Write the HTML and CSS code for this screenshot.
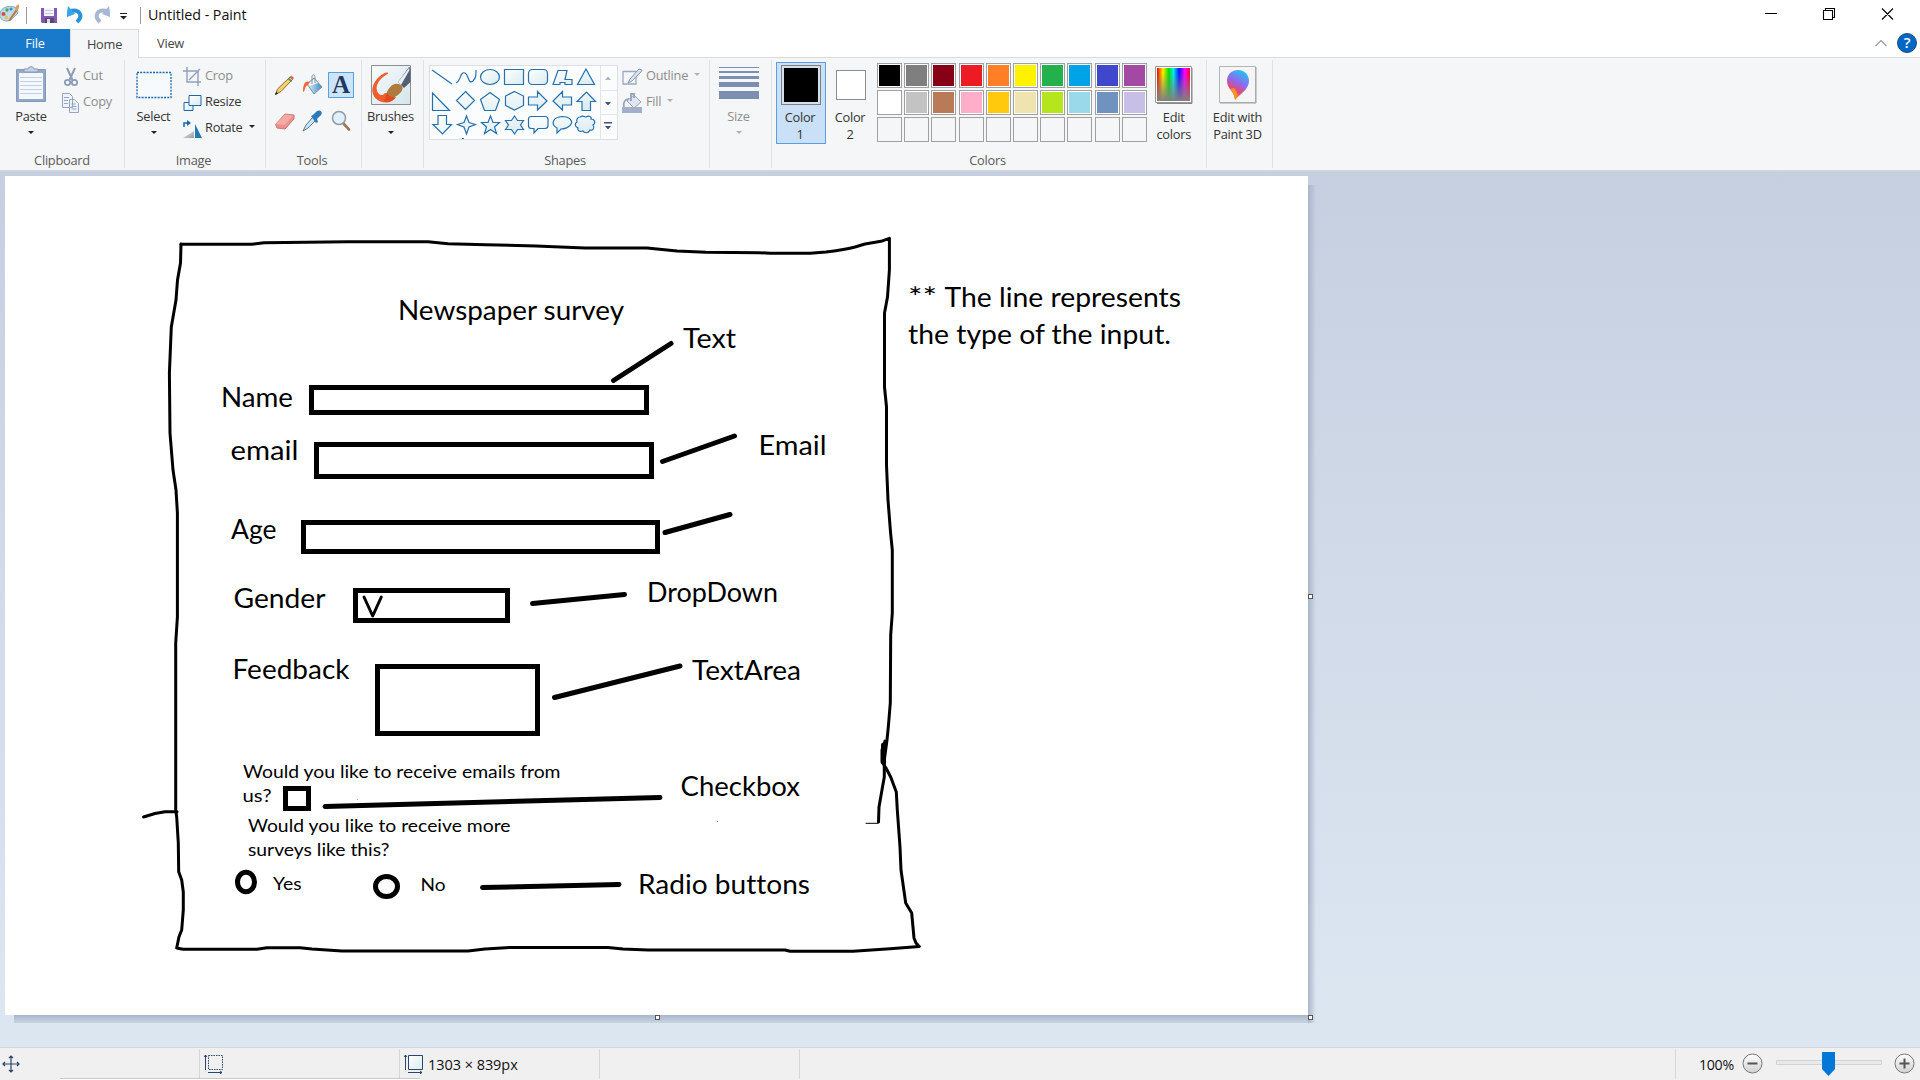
FILE: index.html
```html
<!DOCTYPE html>
<html lang="en">
<head>
<meta charset="utf-8">
<title>Untitled - Paint</title>
<link rel="stylesheet" href="styles.css">
</head>
<body>
<svg class="defs" width="0" height="0">
  <defs>
    <linearGradient id="shape" x1="0" y1="0" x2="1" y2="1"><stop offset="0" stop-color="#fff"/><stop offset="1" stop-color="#d8ebf0"/></linearGradient>
    <linearGradient id="blue" x1="0" y1="0" x2="1" y2="0"><stop offset="0" stop-color="#e4f1fa"/><stop offset="1" stop-color="#3d8cc8"/></linearGradient>
    <linearGradient id="fade" x1="0" y1="0" x2="1" y2="1"><stop offset="0" stop-color="#eee"/><stop offset="1" stop-color="#999"/></linearGradient>
    <linearGradient id="bg" x1="0" y1="0" x2="1" y2="1"><stop offset="0" stop-color="#f8fafb"/><stop offset="1" stop-color="#d3e6ec"/></linearGradient>
    <linearGradient id="hue"><stop offset="0" stop-color="#e00"/><stop offset=".18" stop-color="#fe0"/><stop offset=".36" stop-color="#0d0"/><stop offset=".5" stop-color="#0ee"/><stop offset=".67" stop-color="#11f"/><stop offset=".84" stop-color="#f0f"/><stop offset="1" stop-color="#f02"/></linearGradient>
    <linearGradient id="dull" x1="0" y1="0" x2="0" y2="1"><stop offset=".15" stop-color="#808080" stop-opacity="0"/><stop offset="1" stop-color="#808080"/></linearGradient>
    <linearGradient id="drop" x1=".7" y1="0" x2=".3" y2="1"><stop offset="0" stop-color="#20c8f5"/><stop offset=".4" stop-color="#8b6cf0"/><stop offset=".7" stop-color="#e8447c"/><stop offset="1" stop-color="#ffb000"/></linearGradient>
    <linearGradient id="knob" x1="0" y1="0" x2="0" y2="1"><stop offset="0" stop-color="#fff"/><stop offset="1" stop-color="#d0d0d0"/></linearGradient>
  </defs>
</svg>

<header class="titlebar">
  <div class="quick">
    <svg class="app-icon" width="20" height="20" viewBox="0 0 20 20"><path d="M0 9C1 4 8 1 14 3c5 2 5 7 1 9-2 1-3 5-8 5S-1 14 0 9z" fill="#b9dceb" stroke="#7da7bf"/><circle cx="3.500" cy="10" r="2" fill="#d94d3b"/><circle cx="7" cy="6" r="1.700" fill="#4ca853"/><circle cx="11" cy="5" r="1.600" fill="#3b8fd4"/><circle cx="6.500" cy="13.500" r="1.800" fill="#edc04f"/><path d="M8 17 16 5l2 1-8 11z" fill="#c8743a"/><path d="M15 6l1-4 3-2v4l-2 3z" fill="#d7a05b"/></svg>
    <i class="bar"></i>
    <svg class="save" width="16" height="15" viewBox="0 0 16 15"><path d="M0 0h16v15H1L0 14z" fill="#8258b5"/><path d="M3 0h10v8H3z" fill="#f4f3f8"/><path d="M4 2.500h8M4 5.500h8" stroke="#c9c5d8"/><path d="M4 10h9v5H4z" fill="#564b62"/><path d="M6 11h3v4H6z" fill="#dcdce4"/></svg>
    <svg class="undo" width="17" height="18" viewBox="0 0 17 18"><path d="M2 5.500C13 2 16.500 10 10 16" fill="none" stroke="#2a93d8" stroke-width="4"/><path d="M0 6 1 0l7 8-8 3z" fill="#39a5e5"/></svg>
    <svg class="redo" width="17" height="18" viewBox="0 0 17 18"><path d="M15 5.500C4 2 .5 10 7 16" fill="none" stroke="#a9b8d2" stroke-width="4"/><path d="M17 6 16 0 9 8l8 3z" fill="#a9b8d2"/></svg>
    <svg class="more" width="7" height="7" viewBox="0 0 7 7"><path d="M0 .5h7" stroke="#222"/><path d="M0 3h7L3.500 6.500z" fill="#222"/></svg>
    <i class="bar"></i>
    <h1>Untitled - Paint</h1>
  </div>
  <svg class="window-buttons" width="150" height="14" viewBox="0 0 150 14" fill="none" stroke="#000" stroke-width="1.100"><path d="M5 6.500h12M63.500 3.500h9v9h-9zM65.500 3V1.500h9v9H73M122 1.500l11 11M133 1.500l-11 11"/></svg>
</header>

<nav class="tabs">
  <span class="tab file">File</span><span class="tab home">Home</span><span class="tab view">View</span>
  <svg class="help" width="44" height="22" viewBox="0 0 44 22"><path d="M2.500 14 8 8.500l5.500 5.500" fill="none" stroke="#999" stroke-width="1.200"/><circle cx="34" cy="11" r="9.500" fill="#0067c5" stroke="#194f83"/><text x="34" y="16" text-anchor="middle" class="help-mark">?</text></svg>
</nav>

<section class="ribbon">
  <div class="group clipboard">
    <div class="tools-row">
      <div class="big paste">
        <svg width="32" height="38" viewBox="0 0 32 38"><path d="M1.500 3.500h29v32h-29z" fill="#93a8c9" stroke="#8398bb"/><path d="M4 7h24v26H4z" fill="#f4f8fd"/><path d="M5 11.500h22M5 15.500h22M5 19.500h22M5 23.500h22M5 27.500h22" stroke="#c3d0e3"/><path d="M9 6V3h4c0-3 6-3 6 0h4v3z" fill="#c5d0e0" stroke="#8398bb"/></svg>
        <span>Paste</span><i class="arrow"></i>
      </div>
      <div class="small-list off">
        <div class="small"><svg width="18" height="20" viewBox="0 0 18 20" fill="none" stroke="#8c9cb8"><path d="M5 1l5.500 12M13 1 7.500 13" stroke-width="2"/><circle cx="5.500" cy="15.500" r="2.700" stroke-width="1.800"/><circle cx="12.500" cy="15.500" r="2.700" stroke-width="1.800"/></svg><span>Cut</span></div>
        <div class="small"><svg width="18" height="20" viewBox="0 0 18 20" fill="#f0f4fa" stroke="#94a5c2"><path d="M.5.500h7l3 3v11H.5zM7.500 6.500h5l4 4v9h-9z"/><path d="M2 4.500h5M2 7.500h4M2 10.500h4M9.500 11h4M9.500 13.500h5M9.500 16h5"/></svg><span>Copy</span></div>
      </div>
    </div>
    <div class="caption">Clipboard</div>
  </div>

  <div class="group image">
    <div class="tools-row">
      <div class="big select">
        <svg width="36" height="38" viewBox="0 0 36 38"><path d="M1 6.500h34v25H1z" fill="#f7fafd" stroke="#1968ab" stroke-width="1.300" stroke-dasharray="2 1.200"/></svg>
        <span>Select</span><i class="arrow"></i>
      </div>
      <div class="small-list">
        <div class="small off"><svg width="19" height="20" viewBox="0 0 19 20" fill="none" stroke="#8fa0bd" stroke-width="1.400"><path d="M4 0v15h14M0 4h15v15M6 13 17 2"/></svg><span>Crop</span></div>
        <div class="small"><svg width="19" height="18" viewBox="0 0 19 18" fill="url(#shape)" stroke="#1968ab"><path d="M1 8.500h9v8H1z"/><path d="M6 1.500h12v10H6z"/></svg><span>Resize</span></div>
        <div class="small"><svg width="19" height="20" viewBox="0 0 19 20"><path d="M0 19 11 12v7z" fill="url(#fade)"/><path d="M12 5v14h7z" fill="#2379b5"/><path d="M1 8V4h4" fill="none" stroke="#1968ab" stroke-width="1.500"/><path d="M4 1l4 3-4 3z" fill="#1968ab"/></svg><span>Rotate</span><i class="arrow"></i></div>
      </div>
    </div>
    <div class="caption">Image</div>
  </div>

  <div class="group tools">
    <div class="tool-grid">
      <span class="tool"><svg width="22" height="22" viewBox="0 0 22 22"><path d="M1.500 20.500l2-5.500L16 3l2.500 2.500L7 17.500z" fill="#f5cf66" stroke="#77613b" stroke-width=".9"/><path d="M15.500 3l2-1.500 2.500 2.500-1.500 2z" fill="#cf6d68"/><path d="M14.500 4.500l3 3" stroke="#4b8b64" stroke-width="1.600"/><path d="M1 21l1.200-3.200 2 1.700z" fill="#222"/></svg></span>
      <span class="tool"><svg width="22" height="22" viewBox="0 0 22 22"><path d="M5 10 12 4l8 9-8 7z" fill="url(#blue)" stroke="#7890a4"/><path d="M6 10 12 5l4 4-8 3z" fill="#edf6fb"/><path d="M10 10V2c1-2 3-1 3 1v6" fill="none" stroke="#8993a0"/><path d="M8 8C3 6 1 10 1 18c3-1 1-6 5-7z" fill="#ef683b"/></svg></span>
      <span class="tool chosen">A</span>
      <span class="tool"><svg width="22" height="22" viewBox="0 0 22 22"><path d="M1.500 14.500 11 4l9 1v4l-9 10-8-1z" fill="#ed8f8b" stroke="#cb7774"/><path d="M2 14 11 4.500l8 1-8 9.500z" fill="#f7aaa4"/></svg></span>
      <span class="tool"><svg width="22" height="22" viewBox="0 0 22 22"><path d="M1 21l3-6 7-8 3 3-8 8z" fill="#c9e6f5" stroke="#5b7689"/><path d="M9 6l2-1 4-4c4-2 6 2 4 4l-4 4 1 3-2 1z" fill="#2e79bb"/></svg></span>
      <span class="tool"><svg width="22" height="22" viewBox="0 0 22 22"><path d="M13 13l6 6.500" stroke="#9b7957" stroke-width="2.600" stroke-linecap="round"/><circle cx="9" cy="8" r="6.500" fill="#e0f1fd" stroke="#929ba8" stroke-width="1.500"/></svg></span>
    </div>
    <div class="caption">Tools</div>
  </div>

  <div class="group brushes">
    <div class="big">
      <svg width="40" height="40" viewBox="0 0 40 40"><path d="M.5.500h39v39H.5z" fill="url(#bg)" stroke="#8e8e8e"/><path d="M16.500 7.500C13 7 3 14 1.500 23 0 32 8 38 16 37.500c6-.5 8-4 8-8L14 28c-2 3-6 3-8-2-2-7 4-13 9-16 2-1 3-2 1.500-2.500z" fill="#ee5d2c"/><path d="M27 17 38 2l1.500 1v14L33 23z" fill="#516072"/><path d="M27 17 38 3l.5 2-8.500 15z" fill="#e8eef3"/><path d="M15 29c3-7 7-11 12-10 6 1 6 6 1 10-4 4-8 4-11 3-2-1-2-2-2-3z" fill="#b07a3c"/><path d="M12 36c3-1 2-5 4-8 3 4 6 5 9 4-2 4-8 6-13 4z" fill="#e24a1d"/></svg>
      <span>Brushes</span><i class="arrow"></i>
    </div>
  </div>

  <div class="group shapes">
    <div class="tools-row">
      <div class="gallery">
        <svg width="170" height="73" viewBox="430 66 170 73" fill="url(#shape)" stroke="#2570ad" stroke-width="1.200">
          <path d="M432 70l20 14" fill="none"/><path d="M456 83c5-2 4-12 9-10 4 2 3 12 8 8 3-3 3-6 3-11" fill="none"/><ellipse cx="490" cy="77" rx="9.500" ry="7.500"/><path d="M504.500 69.500h19v15h-19z"/><rect x="528.500" y="69.500" width="19" height="15" rx="4"/><path d="M553 84.500l5-14h9l-2 9h7v5h-7v-2h-5v2zM586 69l8.500 15.500h-17z"/>
          <path d="M432.500 93v17.500h17zM465.500 91.500l9 9-9 9-9-9zM490 92.500l9.500 7-4 11h-11l-4-11zM514.500 91.500l9 4.500v9.500l-9 4.500-9-4.500V96zM528.500 97h9v-5.500l9.500 9.500-9.500 9v-5h-9zM571.500 97h-9v-5.500l-9.500 9.500 9.500 9v-5h9zM582 110.500v-9h-5l9.500-9.500 9 9.500h-5v9z"/>
          <path d="M438 115.500v9h-5l9.500 9.500 9-9.500h-5v-9zM466.500 116l2.500 6.500 6.500 2-6.500 2.500-2.500 7-2.500-7-6.500-2.500 6.500-2zM490.500 116l2.500 6.500h6.500l-5 4.500 2 6.500-6-4-6 4 2-6.500-5-4.500h6.500zM514.500 116l3 4.500h6l-3 4.500 3 4.500h-6l-3 4.500-3-4.500h-6l3-4.500-3-4.500h6z"/><path d="M531 116.500h14q3 0 3 3v6q0 3-3 3h-7l-4 4.500v-4.500h-3q-2.500 0-2.500-3v-6q0-3 2.500-3zM557 128c-7-4-4-11 5-11.500 8 0 12 5 8 9-3 3-6 3.500-9 3.500l-4 4zM580 117c3-2 5 0 6 0 3-2 6 0 5 2 4 0 5 4 2 6 2 3 0 6-3 5-2 4-6 3-7 1-3 1-6 0-5-3-4-2-3-5-1-6-1-3 1-5 3-5z"/>
          <path d="M462 138.500h2" stroke-width="1"/>
        </svg>
        <svg class="scroll" width="18" height="73" viewBox="0 0 18 73"><path d="M.5 0v73M0 24.500h18M0 48.500h18" stroke="#e2e4e7"/><path d="M5 14h6L8 10.500z" fill="#b0b6c0"/><path d="M5 36h6l-3 3.500zM5 60h6l-3 3.500zM4 56h8v1.500H4z" fill="#3f5573"/></svg>
      </div>
      <div class="small-list off style">
        <div class="small"><svg width="21" height="18" viewBox="0 0 21 18"><path d="M1 3.500h14M1 3v13h13V9" fill="none" stroke="#9aa9c2" stroke-width="1.300"/><path d="M6 15l2-4L17 1l3 1-1 2-9 9z" fill="#d8e0ec" stroke="#8798b5"/></svg><span>Outline</span><i class="arrow"></i></div>
        <div class="small"><svg width="21" height="20" viewBox="0 0 21 20"><path d="M0 14h20v6H0z" fill="#a3b0ca"/><path d="M5 8l7-6 7 7-7 6z" fill="#dfe6ef" stroke="#97a5bd"/><path d="M9 8V1h3v4M2 14C1 9 3 6 7 6" fill="none" stroke="#97a5bd" stroke-width="1.800"/></svg><span>Fill</span><i class="arrow"></i></div>
      </div>
    </div>
    <div class="caption">Shapes</div>
  </div>

  <div class="group size off">
    <div class="big">
      <svg width="40" height="38" viewBox="0 0 40 38" fill="#7c8fb1"><path d="M0 1h40v1H0zM0 5h40v2H0zM0 10h40v3H0zM0 16h40v5H0zM0 25h40v8H0z"/></svg>
      <span>Size</span><i class="arrow"></i>
    </div>
  </div>

  <div class="group colors">
    <div class="tools-row">
      <div class="slot current"><b class="ink black"></b><span>Color<br>1</span></div>
      <div class="slot"><b class="ink white"></b><span>Color<br>2</span></div>
      <div class="palette">
        <i class="c1"></i><i class="c2"></i><i class="c3"></i><i class="c4"></i><i class="c5"></i><i class="c6"></i><i class="c7"></i><i class="c8"></i><i class="c9"></i><i class="c10"></i>
        <i class="c11"></i><i class="c12"></i><i class="c13"></i><i class="c14"></i><i class="c15"></i><i class="c16"></i><i class="c17"></i><i class="c18"></i><i class="c19"></i><i class="c20"></i>
        <i></i><i></i><i></i><i></i><i></i><i></i><i></i><i></i><i></i><i></i>
      </div>
      <div class="big edit">
        <svg width="38" height="38" viewBox="0 0 38 38"><path d="M.5.500h36v36H.5z" fill="#fff" stroke="#999"/><path d="M37 2v35.500H2" fill="none" stroke="#888"/><path d="M2 2h33v33H2z" fill="url(#hue)"/><path d="M2 2h33v33H2z" fill="url(#dull)"/></svg>
        <span>Edit<br>colors</span>
      </div>
    </div>
    <div class="caption">Colors</div>
  </div>

  <div class="group paint3d">
    <div class="big">
      <svg width="38" height="38" viewBox="0 0 38 38"><path d="M.5.500h36v36H.5z" fill="#f5f5f5" stroke="#b5b5b5"/><path d="M37 1v36H1" fill="none" stroke="#a0a0a0"/><path d="M19 4c7 0 11 5 11 11 0 8-8 12-14 19 0-8-8-11-8-19C8 9 12 4 19 4z" fill="url(#drop)"/><path d="M15 22c4 4 4 8 1 12-1-4-1-7-5-11z" fill="#f7931e"/></svg>
      <span>Edit with<br>Paint 3D</span>
    </div>
  </div>
</section>

<main class="workspace">
  <div class="canvas">
    <svg width="1303" height="839" viewBox="5 176 1303 839">
      <g class="outline">
        <path d="M181 244.300H252L264 242.700 348 241.700H428L448 243.700 486 244.700 536 246 585 248H647L677 251 706 252.300 759 252.700 770 253.300H810L826 252Q843 250 855 247L865 244 881 241.300 889.400 238.300V270L887.500 297 884.500 313V387L886.500 407V465L888 500 890.600 533 892.300 550V613L890.700 635 890.300 703 888.300 727 887 740 884.300 760V777L882.500 787 879 807 878.500 822"/>
        <path d="M866 823.300H878" class="thin"/>
        <path d="M885 741 882 750V762L886 768 890.700 777 896.300 792 897.300 810 900 847 901 870 905.700 903 911.700 913 914 938 916 943 919.300 946.500 890 948.700 853 951.300H790L785 950H648L623 949 608 947.500H510L485 949 468 951H342L312 949 300 947.700H267L257 949.300H183L176.700 948 179 936.700 181.700 930 183.300 910V892L181.700 880 178.700 871.700 178.300 843 176.700 817 175.700 810V643L177.400 617V513L176 490 173 470 170 433 169.400 373 171.300 327 176 300 177.500 280 180.500 263 181 244"/>
        <path d="M143.500 817 155 813.500 165 811.700H177"/>
        <path d="M883.500 745V762" class="thick"/>
        <path d="M364 597 372.700 616 381.300 597"/>
      </g>
      <g class="marker">
        <path d="M311.500 387.500h335v25h-335zM316.500 444.500h335v32h-335zM303.500 522.500h354v29h-354zM355.500 590.500h152v30h-152zM377.500 666.500h160v67h-160zM285.500 788.500h23v20h-23z"/>
        <path class="round" d="M613.500 380.500 671 343.500M662.500 461.500 734.500 436M665 532.500 730 514.500M532.500 603.500 624.500 594.500M554.500 697.500 680 666M325 806.500 660 797.500M482.500 887.500 619 884.500"/>
        <ellipse cx="246" cy="882" rx="8.500" ry="9.700"/><ellipse cx="386.500" cy="886.500" rx="11" ry="10"/>
      </g>
      <g class="large">
        <text x="398" y="319.500" textLength="226" lengthAdjust="spacingAndGlyphs">Newspaper survey</text>
        <text x="683" y="347.700" textLength="53" lengthAdjust="spacingAndGlyphs">Text</text>
        <text x="221" y="406.700" textLength="72" lengthAdjust="spacingAndGlyphs">Name</text>
        <text x="230.500" y="459.500" textLength="68" lengthAdjust="spacingAndGlyphs">email</text>
        <text x="758.500" y="455" textLength="68" lengthAdjust="spacingAndGlyphs">Email</text>
        <text x="231" y="539" textLength="45.500" lengthAdjust="spacingAndGlyphs">Age</text>
        <text x="233.500" y="607.700" textLength="92" lengthAdjust="spacingAndGlyphs">Gender</text>
        <text x="647" y="602.300" textLength="131" lengthAdjust="spacingAndGlyphs">DropDown</text>
        <text x="232.500" y="679" textLength="117" lengthAdjust="spacingAndGlyphs">Feedback</text>
        <text x="692" y="679.700" textLength="109" lengthAdjust="spacingAndGlyphs">TextArea</text>
        <text x="680.500" y="796" textLength="119.500" lengthAdjust="spacingAndGlyphs">Checkbox</text>
        <text x="638" y="893.700" textLength="172" lengthAdjust="spacingAndGlyphs">Radio buttons</text>
        <text x="908" y="307" textLength="29" lengthAdjust="spacingAndGlyphs">**</text>
        <text x="944.500" y="307" textLength="236.500" lengthAdjust="spacingAndGlyphs">The line represents</text>
        <text x="908" y="344" textLength="263" lengthAdjust="spacingAndGlyphs">the type of the input.</text>
      </g>
      <g class="medium">
        <text x="243" y="778.300" textLength="317.500" lengthAdjust="spacingAndGlyphs">Would you like to receive emails from</text>
        <text x="242.500" y="802.300" textLength="29" lengthAdjust="spacingAndGlyphs">us?</text>
        <text x="248" y="832" textLength="262.500" lengthAdjust="spacingAndGlyphs">Would you like to receive more</text>
        <text x="248" y="856.300" textLength="141.500" lengthAdjust="spacingAndGlyphs">surveys like this?</text>
        <text x="273" y="890.300" textLength="28.500" lengthAdjust="spacingAndGlyphs">Yes</text>
        <text x="420.500" y="891.300" textLength="25" lengthAdjust="spacingAndGlyphs">No</text>
      </g>
      <path d="M357 799h1v1h-1zM717 821h1v1h-1z" fill="#aaa"/>
    </svg>
    <i class="shade right"></i><i class="shade bottom"></i>
    <i class="handle e"></i><i class="handle s"></i><i class="handle se"></i>
  </div>
</main>

<footer class="status">
  <div class="cell first"><svg width="18" height="18" viewBox="0 0 18 18" fill="none" stroke="#2c456b" stroke-width="1.200"><path d="M9 1v16M1 9h16M7 3l2-2 2 2M7 15l2 2 2-2M3 7 1 9l2 2M15 7l2 2-2 2"/></svg></div>
  <div class="cell"><svg width="19" height="20" viewBox="0 0 19 20" fill="none" stroke="#2c456b"><path d="M1.500 16V1M0 3l1.500-2L3 3M4 18.500h14M16 17l2 1.500-2 1.500"/><path d="M4.500 1.500h14v14h-14z" stroke-dasharray="1.500 1"/></svg></div>
  <div class="cell"><svg width="19" height="20" viewBox="0 0 19 20" fill="none" stroke="#2c456b"><path d="M1.500 16V1M0 3l1.500-2L3 3M4 18.500h14M16 17l2 1.500-2 1.500"/><path d="M4.500 1.500h14v14h-14z" fill="url(#shape)"/></svg><span>1303 × 839px</span></div>
  <div class="cell"></div>
  <div class="zoom">
    <span>100%</span>
    <svg width="21" height="21" viewBox="0 0 21 21"><circle cx="10.500" cy="10.500" r="9.500" fill="url(#knob)" stroke="#777"/><path d="M5.500 10.500h10" stroke="#555" stroke-width="2"/></svg>
    <svg class="slider" width="106" height="24" viewBox="0 0 106 24"><path d="M.5 8.500h105v4H.5z" fill="#e7eaea" stroke="#d2d2d2"/><path d="M46 0h13v17l-6.500 7-6.500-7z" fill="#0078d7"/></svg>
    <svg width="21" height="21" viewBox="0 0 21 21"><circle cx="10.500" cy="10.500" r="9.500" fill="url(#knob)" stroke="#777"/><path d="M5.500 10.500h10M10.500 5.500v10" stroke="#555" stroke-width="2"/></svg>
  </div>
  <i class="peek"></i>
</footer>
</body>
</html>
```
FILE: styles.css
```css
* { box-sizing: border-box; }
body {
  margin: 0;
  width: 1920px;
  height: 1080px;
  overflow: hidden;
  display: flex;
  flex-direction: column;
  background: #fff;
  color: #333;
  font: 12.8px/17px "Open Sans", "Noto Sans", sans-serif;
  letter-spacing: -0.25px;
}
.defs { position: absolute; }
svg { flex: none; display: block; }
i { font-style: normal; }

.titlebar { height: 29px; display: flex; justify-content: space-between; }
.quick { display: flex; align-items: center; height: 30px; }
.bar { width: 1px; height: 17px; background: #999; }
.app-icon { margin: 0 6px 2px 0; }
.save { margin: 1px 10px 0 14px; }
.redo { margin: 0 10px 0 9px; }
.more { margin: 3px 13px 0 0; }
.quick .bar + h1 { margin: -2px 0 0 7px; }
h1 { font-size: 14.3px; font-weight: 400; color: #111; letter-spacing: -0.05px; }
.window-buttons { margin: 7px 10px 0 0; }

.tabs { height: 29px; display: flex; border-bottom: 1px solid #dadbdc; padding-right: 3px; }
.tab { height: 29px; line-height: 28px; text-align: center; font-size: 12.8px; color: #444; }
.tab.file { width: 70px; height: 28px; background: #1979ca; color: #fff; }
.home { width: 69px; background: #f5f6f7; border: 1px solid #dadbdc; border-bottom: 0; }
.view { width: 63px; }
.help { margin: 3px 0 0 auto; }
.help-mark { font: 600 15px "Open Sans", sans-serif; fill: #fff; }

.ribbon { height: 113px; display: flex; background: #f5f6f7; border-bottom: 1px solid #d5d9df; padding-top: 2px; }
.group { height: 108px; border-right: 1px solid #e0e2e4; padding-top: 4px; display: flex; flex-direction: column; }
.caption { margin: auto 0 -4px; padding-right: 3px; text-align: center; height: 24px; line-height: 24px; color: #5a5a5a; }
.clipboard .caption { padding-right: 0; }
.tools-row { display: flex; align-items: flex-start; }
.big { display: flex; flex-direction: column; align-items: center; text-align: center; padding-top: 2px; }
.big span { margin-top: 4px; }
.arrow { width: 0; height: 0; border: 3.500px solid transparent; border-top-color: #222; border-bottom: 0; }
.big .arrow { margin-top: 6px; }
.small-list { display: flex; flex-direction: column; }
.small { height: 26px; display: flex; align-items: center; }
.small span { margin: -3px 0 0 3px; }
.small .arrow { margin: -5px 0 0 6px; }
.off { color: #8d8d8d; }
.off .arrow { border-top-color: #b0b0b0; }

.clipboard { width: 125px; }
.paste { width: 62px; }
.image { width: 141px; }
.select { width: 57px; }
.image .small-list { margin-left: 1px; }
.tools { width: 96px; }
.tool-grid { display: grid; grid-template-columns: repeat(3, 28px); grid-template-rows: 26px 26px; row-gap: 10px; padding: 8px 0 0 5px; }
.tool { display: flex; align-items: center; justify-content: center; }
.chosen { width: 26px; background: #cce4f7; border: 1px solid #5a9fe0; color: #1f3a60; font: 700 25px/24px "Liberation Serif", serif; margin-left: 1px; }
.brushes { width: 62px; }
.brushes .big { padding: 1px 4px 0 0; }
.brushes .big span { margin-top: 3px; }
.shapes { width: 286px; }
.gallery { width: 189px; height: 75px; margin: 1px 2px 0 5px; display: flex; background: #fbfcfd; border: 1px solid #dcdfe3; }
.small-list.style { margin-left: 2px; }
.size { width: 62px; padding-right: 4px; }
.colors { width: 435px; }
.slot { width: 50px; height: 82px; margin-top: -2px; display: flex; flex-direction: column; align-items: center; text-align: center; border: 1px solid transparent; }
.slot.current { margin-left: 4px; background: #c9e0f7; border-color: #5e9ee0; }
.ink { width: 40px; height: 40px; margin-top: 2px; border: 1px solid #7f7f7f; box-shadow: inset 0 0 0 2px #d4dfe9; }
.ink.black { background: #000; }
.ink.white { width: 30px; height: 30px; margin: 7px 0 5px; background: #fff; border-color: #8b8b8b; box-shadow: none; }
.slot span { margin: 4px 2px 0 0; }
.palette { display: grid; grid-template-columns: repeat(10, 25px); grid-auto-rows: 25px; column-gap: 2.200px; row-gap: 2px; margin: -1px 0 0 1px; }
.palette i { border: 1px solid #a0a0a0; box-shadow: inset 0 0 0 1px #fff; }
.palette i:nth-child(n+21) { box-shadow: none; }
.c1 { background: #000; } .c2 { background: #7f7f7f; } .c3 { background: #880015; } .c4 { background: #ed1c24; } .c5 { background: #ff7f27; }
.c6 { background: #fff200; } .c7 { background: #22b14c; } .c8 { background: #00a2e8; } .c9 { background: #3f48cc; } .c10 { background: #a349a4; }
.c11 { background: #fff; } .c12 { background: #c3c3c3; } .c13 { background: #b97a57; } .c14 { background: #ffaec9; } .c15 { background: #ffc90e; }
.c16 { background: #efe4b0; } .c17 { background: #b5e61d; } .c18 { background: #99d9ea; } .c19 { background: #7092be; } .c20 { background: #c8bfe7; }
.edit { margin-left: 8px; width: 38px; }
.edit span, .paint3d span { margin-top: 5px; }
.paint3d { width: 66px; padding-right: 4px; }

.workspace { height: 876px; padding: 5px; background: linear-gradient(#c5cfe0, #dce6f1 95%); }
.canvas { position: relative; width: 1303px; height: 839px; background: #fff; }
.outline { fill: none; stroke: #000; stroke-width: 3; stroke-linejoin: round; stroke-linecap: round; }
.outline .thin { stroke-width: 1; }
.outline .thick { stroke-width: 5; }
.marker { fill: none; stroke: #000; stroke-width: 5; }
.round { stroke-linecap: round; }
.large, .medium { fill: #000; font-family: "Lato", sans-serif; letter-spacing: 0; font-variant-ligatures: none; }
.large { font-size: 26.2px; }
.medium { font-size: 18.2px; }
.shade { position: absolute; }
.shade.right { left: 1303px; top: 9px; width: 8px; height: 838px; background: linear-gradient(90deg, #a9b6ca, transparent); }
.shade.bottom { left: 9px; top: 839px; width: 1294px; height: 8px; background: linear-gradient(#a9b6ca, #c9d4e2); }
.handle { position: absolute; width: 5px; height: 5px; background: #fff; border: 1px solid #555; }
.handle.e { left: 1303px; top: 418px; }
.handle.s { left: 650px; top: 839px; }
.handle.se { left: 1303px; top: 839px; }

.status { position: relative; height: 33px; display: flex; background: #f0f0f0; border-top: 1px solid #d5d7da; color: #111; padding-right: 1px; }
.cell { width: 200px; height: 30px; margin-top: 1px; border-right: 1px solid #d8d8d8; padding: 0 4px; display: flex; align-items: center; }
.cell svg { margin-top: -1px; }
.cell.first { padding-left: 2px; }
.cell span { margin: 1px 0 0 5px; font-size: 14.5px; letter-spacing: -0.05px; }
.zoom { margin: 1px 0 0 auto; width: 244px; height: 30px; border-left: 1px solid #d8d8d8; padding: 0 3px 0 23px; display: flex; align-items: center; }
.zoom span { width: 43px; font-size: 14.2px; letter-spacing: -0.3px; }
.zoom svg { margin-top: -2px; }
.zoom .slider { margin: 0 12px 0 13px; }
.peek { position: absolute; left: 60px; top: 30px; width: 360px; height: 2px; background: #fff; border-top: 1px solid #c8c8c8; }
```
